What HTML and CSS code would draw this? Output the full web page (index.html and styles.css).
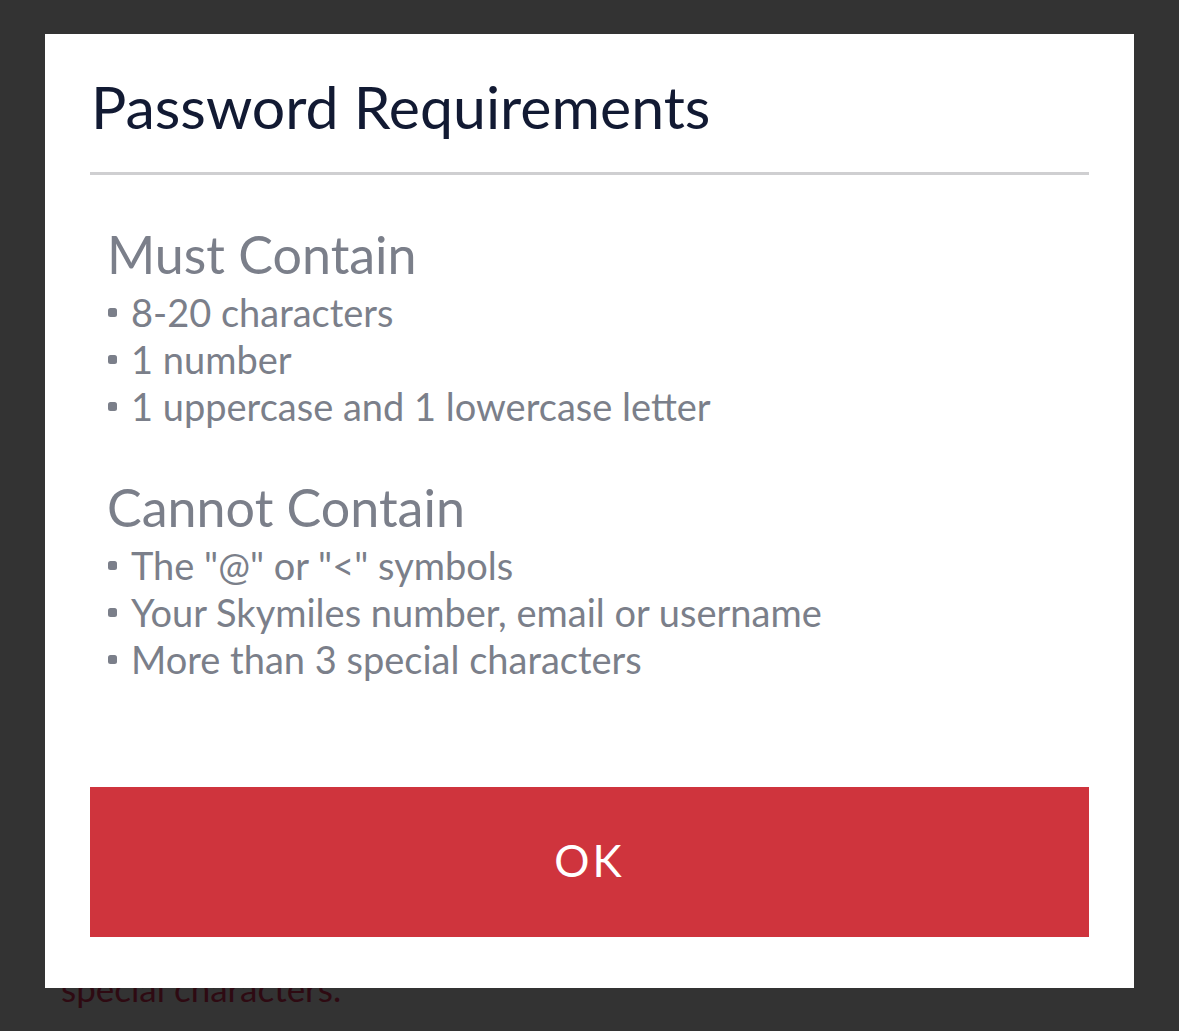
FILE: index.html
```html
<!DOCTYPE html>
<html lang="en">
  <head>
    <meta charset="UTF-8" />
    <meta name="viewport" content="width=device-width, initial-scale=1.0" />
    <title>Password Requirements</title>
    <link rel="stylesheet" href="styles.css">
  </head>
  <body>
    <div class="page-behind">
      <p class="hint">special characters.</p>
    </div>

    <div class="modal" role="dialog" aria-labelledby="modalTitle">
      <h1 class="modal-title" id="modalTitle">Password Requirements</h1>
      <div class="modal-body">
        <h2>Must Contain</h2>
        <ul class="rules">
          <li>8-20 characters</li>
          <li>1 number</li>
          <li>1 uppercase and 1 lowercase letter</li>
        </ul>
        <h2>Cannot Contain</h2>
        <ul class="rules">
          <li>The "@" or "&lt;" symbols</li>
          <li>Your Skymiles number, email or username</li>
          <li>More than 3 special characters</li>
        </ul>
      </div>
      <button class="ok-btn">OK</button>
    </div>
  </body>
</html>
```

FILE: styles.css
```css
/* Layout */
html,
body {
  margin: 0;
  padding: 0;
  width: 100%;
  height: 100%;
  overflow: hidden;
  background: #333;
  font-family: Lato, "Open Sans", sans-serif;
}
/* Page under the dim overlay */
.page-behind {
  padding: 967px 0 0 61px;
}
.hint {
  margin: 0;
  font-size: 35px;
  line-height: 42px;
  color: #2e0a12;
}
/* Modal */
.modal {
  position: absolute;
  top: 34px;
  left: 45px;
  width: 1089px;
  height: 954px;
  box-sizing: border-box;
  padding: 0 45px;
  background: #fff;
  display: flex;
  flex-direction: column;
}
.modal-title {
  margin: 0;
  padding: 35px 0 27px 1px;
  font-size: 59px;
  line-height: 76px;
  font-weight: normal;
  color: #121a33;
  border-bottom: 3px solid #cfcfd1;
}
.modal-body {
  padding: 47px 17px 0;
  color: #7b7f8a;
  flex: 1;
}
.modal-body h2 {
  margin: 0;
  font-size: 52px;
  font-weight: normal;
  line-height: 64px;
}
.rules {
  list-style: none;
  margin: 3px 0 45px;
  padding: 0;
}
.rules li {
  font-size: 38px;
  line-height: 47px;
  display: flex;
  align-items: center;
}
.rules li::before {
  content: "";
  flex: none;
  width: 9px;
  height: 9px;
  margin: 0 14px 0 1px;
  background: #7b7f8a;
  border-radius: 2.5px;
}
/* Button */
.ok-btn {
  height: 150px;
  margin-bottom: 51px;
  padding: 0 0 4px;
  border: none;
  background: #cf343d;
  color: #fff;
  font-family: inherit;
  font-size: 44px;
  letter-spacing: 3px;
  cursor: pointer;
}
```
